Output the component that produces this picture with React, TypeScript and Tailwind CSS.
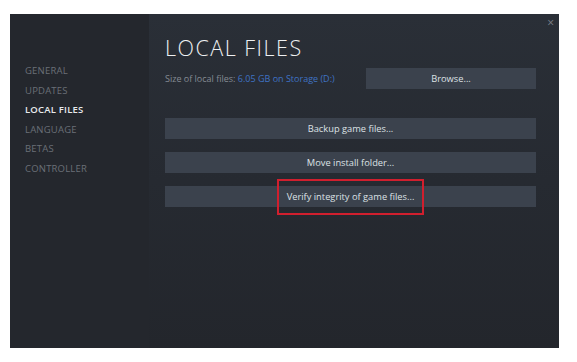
import React from 'react'

const navItems = ['GENERAL', 'UPDATES', 'LOCAL FILES', 'LANGUAGE', 'BETAS', 'CONTROLLER']

const ActionButton = ({ label }: { label: string }) => (
  <button className="w-full h-[21px] bg-[#3b424d] text-[#dde1e5] text-[9.3px] flex items-center justify-center">
    {label}
  </button>
)

const App = () => {
  return (
    <div className="w-[577px] h-[362px] bg-white pt-[14px] pl-[10px]" style={{ fontFamily: '"Open Sans", "Liberation Sans", sans-serif' }}>
      <div className="w-[549px] h-[334px] flex">
        <aside className="w-[139px] bg-[#24272d] pt-[51px] pl-[15px] flex flex-col gap-[8px]">
          {navItems.map((item) => (
            <div
              key={item}
              className={
                item === 'LOCAL FILES'
                  ? 'text-[9.5px] leading-[11.5px] text-[#e8eaec] font-semibold tracking-[0.2px]'
                  : 'text-[9.5px] leading-[11.5px] text-[#6a6f77] tracking-[0.2px]'
              }
            >
              {item}
            </div>
          ))}
        </aside>

        <main className="relative flex-1 bg-gradient-to-b from-[#2a2f37] via-[#262a31] to-[#23262c] pl-[16px] pr-[23px] pt-[20px]">
          <span className="absolute right-[5px] top-[0px] text-[#7b8089] text-[12px]">×</span>
          <h1 className="text-[21.5px] leading-[28px] text-[#eef0f2] font-light tracking-[1.5px]">LOCAL FILES</h1>

          <div className="mt-[6px] flex items-center justify-between">
            <p className="text-[9px] text-[#858b93]">
              Size of local files: <span className="text-[#3f73c4]">6.05 GB on Storage (D:)</span>
            </p>
            <button className="w-[170px] h-[21px] bg-[#3b424d] text-[#dde1e5] text-[9.3px] flex items-center justify-center">
              Browse...
            </button>
          </div>

          <div className="mt-[29px] flex flex-col gap-[13px]">
            <ActionButton label="Backup game files..." />
            <ActionButton label="Move install folder..." />
            <div className="relative">
              <ActionButton label="Verify integrity of game files..." />
              <div className="absolute left-[112px] top-[-7px] w-[147px] h-[36px] border-2 border-[#d11f2e] pointer-events-none" />
            </div>
          </div>
        </main>
      </div>
    </div>
  )
}

export default App
